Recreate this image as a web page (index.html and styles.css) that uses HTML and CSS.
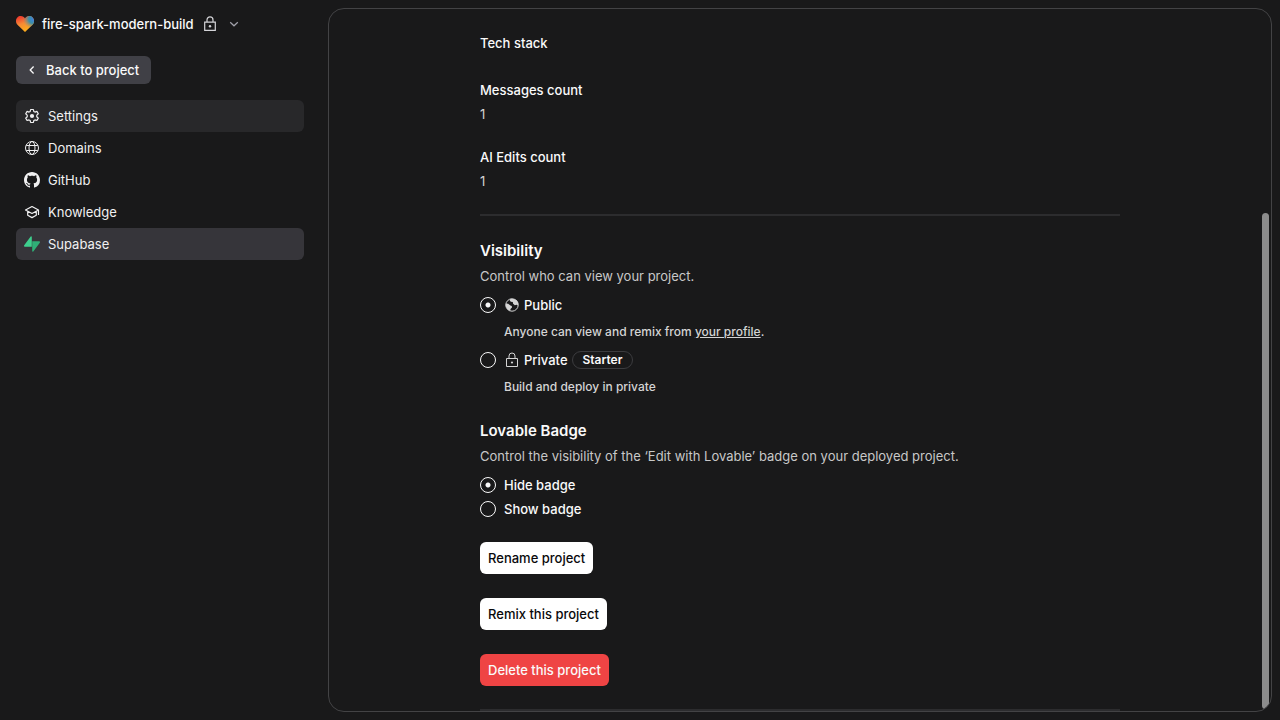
FILE: index.html
```html
<!DOCTYPE html>
<html lang="en">
<head>
<meta charset="utf-8">
<title>Project settings</title>
<link rel="stylesheet" href="styles.css">
</head>
<body>
<div class="app">
  <aside class="sidebar">
    <button class="project" type="button">
      <svg class="logo" width="18" height="16" viewBox="0 0 18 16" aria-hidden="true">
        <defs>
          <linearGradient id="heart-warm" x1="0.1" y1="0" x2="0.5" y2="1">
            <stop offset="0.1" stop-color="#f0402f"/><stop offset="0.5" stop-color="#f58a35"/><stop offset="0.9" stop-color="#fbaa1e"/>
          </linearGradient>
          <radialGradient id="heart-cool" cx="0.98" cy="0.2" r="0.6">
            <stop offset="0" stop-color="#3f7fe0"/><stop offset="0.45" stop-color="#3a8fa8"/><stop offset="1" stop-color="#8a8f80" stop-opacity="0"/>
          </radialGradient>
        </defs>
        <path d="M9 16 1.700 8.900C.3 7.600 0 6.300 0 5 0 2.100 2.100 0 4.800 0 6.700 0 8.200 1 9 2.600 9.800 1 11.300 0 13.200 0 15.900 0 18 2.100 18 5c0 1.300-.3 2.600-1.700 3.900z" fill="url(#heart-warm)"/>
        <path d="M9 16 1.700 8.900C.3 7.600 0 6.300 0 5 0 2.100 2.100 0 4.800 0 6.700 0 8.200 1 9 2.600 9.800 1 11.300 0 13.200 0 15.900 0 18 2.100 18 5c0 1.300-.3 2.600-1.700 3.900z" fill="url(#heart-cool)"/>
      </svg>
      <span class="project-name">fire-spark-modern-build</span>
      <svg class="project-lock" width="16" height="16" viewBox="0 0 16 16" fill="none" stroke="currentColor" stroke-width="1.200" aria-hidden="true"><path d="M2.700 6.200h10.600v8.200H2.700zM5 6V3.900a3 3 0 0 1 6 0V6"/><circle cx="8" cy="10.200" r="1.200" fill="currentColor" stroke="none"/></svg>
      <svg class="chevron" width="16" height="16" viewBox="0 0 16 16" fill="none" stroke="currentColor" stroke-width="1.200" aria-hidden="true"><path d="m4.200 6.200 3.800 3.600 3.800-3.600"/></svg>
    </button>

    <button class="back" type="button">
      <svg width="16" height="16" viewBox="0 0 16 16" fill="none" stroke="currentColor" stroke-width="1.300" aria-hidden="true"><path d="M9.600 4.500 6.200 8l3.400 3.500"/></svg>
      Back to project
    </button>

    <nav class="nav">
      <a class="nav-item current" href="#settings" aria-current="page">
        <svg width="16" height="16" viewBox="0 0 16 16" fill="none" stroke="currentColor" stroke-width="1.200" stroke-linejoin="round" aria-hidden="true"><path d="M6.600 1.500h2.800l.4 1.900 1.200.7 1.900-.7 1.400 2.400-1.500 1.300v1.600l1.500 1.400-1.400 2.400-1.900-.6-1.200.7-.4 1.900H6.600l-.4-1.900-1.200-.7-1.900.6-1.400-2.400 1.500-1.400V7.100L1.700 5.800l1.400-2.400 1.900.7 1.200-.7z"/><circle cx="8" cy="8" r="2.100" fill="currentColor" stroke="none"/></svg>
        Settings
      </a>
      <a class="nav-item" href="#domains">
        <svg width="16" height="16" viewBox="0 0 16 16" fill="none" stroke="currentColor" aria-hidden="true"><circle cx="8" cy="8" r="6.500"/><ellipse cx="8" cy="8" rx="3" ry="6.500"/><path d="M2.200 5.500h11.600M2.200 10.500h11.600"/></svg>
        Domains
      </a>
      <a class="nav-item" href="#github">
        <svg width="16" height="16" viewBox="0 0 16 16" fill="currentColor" aria-hidden="true"><path d="M8 0C3.580 0 0 3.580 0 8c0 3.540 2.290 6.530 5.470 7.590.4.070.55-.17.55-.38 0-.19-.01-.82-.01-1.490-2.010.37-2.530-.49-2.690-.94-.09-.23-.48-.94-.82-1.130-.28-.15-.68-.52-.01-.53.63-.01 1.080.58 1.230.82.72 1.210 1.870.87 2.330.66.07-.52.28-.87.51-1.070-1.780-.2-3.640-.89-3.640-3.950 0-.87.31-1.590.82-2.150-.08-.2-.36-1.020.08-2.120 0 0 .67-.21 2.200.82.640-.18 1.320-.27 2-.27s1.360.09 2 .27c1.530-1.040 2.200-.82 2.200-.82.440 1.100.160 1.920.080 2.120.510.560.820 1.270.820 2.150 0 3.070-1.870 3.750-3.650 3.950.290.250.540.730.540 1.480 0 1.070-.01 1.930-.01 2.200 0 .210.150.460.550.380A8 8 0 0 0 16 8c0-4.420-3.580-8-8-8"/></svg>
        GitHub
      </a>
      <a class="nav-item" href="#knowledge">
        <svg width="16" height="16" viewBox="0 0 16 16" fill="none" stroke="currentColor" stroke-width="1.200" stroke-linejoin="round" aria-hidden="true"><path d="M8 2.500 1.500 6 8 9.500 14.500 6zM14.500 6v5M3.700 7.400v3.900L8 13.600l4.300-2.300V7.400"/></svg>
        Knowledge
      </a>
      <a class="nav-item hovered" href="#supabase">
        <svg width="16" height="16" viewBox="0 0 16 16" aria-hidden="true"><path d="M8.200 5.300h7c.8 0 1.100.8.600 1.400L9.300 15.500c-.4.600-1.100.3-1.100-.4z" fill="#2fae77"/><path d="M7.800 10.700H.8c-.8 0-1.100-.8-.6-1.400L6.700.5c.4-.6 1.100-.3 1.100.4z" fill="#3ecf8e"/></svg>
        Supabase
      </a>
    </nav>
  </aside>

  <main class="panel">
    <div class="content">
      <dl class="stats">
        <div class="stat"><dt>Tech stack</dt></div>
        <div class="stat"><dt>Messages count</dt><dd>1</dd></div>
        <div class="stat"><dt>AI Edits count</dt><dd>1</dd></div>
      </dl>
      <hr class="divider">

      <section class="section">
        <h2>Visibility</h2>
        <p class="description">Control who can view your project.</p>
        <div class="option">
          <input type="radio" id="public" name="visibility" checked>
          <label for="public">
            <svg width="16" height="16" viewBox="0 0 16 16" aria-hidden="true"><circle cx="8" cy="8" r="6.200" fill="none" stroke="currentColor"/><path d="M6.500 1.800 5.600 3.300l1.200 1.500 2 .2.300 1.800 1.700 1.500 1.800-.5 1.500.7.200-2.500-1.500-2.800L10 1.900zM1.800 6.500l2.400.2 2.200 1.800 1.400.6.200 1.500-1.500 1.500-.3 2-2.700-1.600-1.700-3z" fill="currentColor"/></svg>
            Public
          </label>
        </div>
        <p class="hint">Anyone can view and remix from <a href="#profile">your profile</a>.</p>
        <div class="option">
          <input type="radio" id="private" name="visibility">
          <label for="private">
            <svg width="16" height="16" viewBox="0 0 16 16" fill="none" stroke="currentColor" aria-hidden="true"><path d="M2.500 6.500h11v8h-11zM5 6V4a3 3 0 0 1 6 0v2"/><circle cx="8" cy="10.500" r="1.100" fill="currentColor" stroke="none"/></svg>
            Private
            <span class="tag">Starter</span>
          </label>
        </div>
        <p class="hint">Build and deploy in private</p>
      </section>

      <section class="section">
        <h2>Lovable Badge</h2>
        <p class="description">Control the visibility of the ‘Edit with Lovable’ badge on your deployed project.</p>
        <div class="option">
          <input type="radio" id="hide" name="badge" checked>
          <label for="hide">Hide badge</label>
        </div>
        <div class="option compact">
          <input type="radio" id="show" name="badge">
          <label for="show">Show badge</label>
        </div>
      </section>

      <div class="actions">
        <button class="button" type="button">Rename project</button>
        <button class="button" type="button">Remix this project</button>
        <button class="button danger" type="button">Delete this project</button>
      </div>
      <hr class="divider">
    </div>
    <div class="scroll-thumb"></div>
  </main>
</div>
</body>
</html>
```
FILE: styles.css
```css
* { box-sizing: border-box; }

body {
  margin: 0;
  background: #19191a;
  color: #fafafa;
  font: 400 14px/20px Inter, "Liberation Sans", sans-serif;
}

button { font: inherit; color: inherit; border: 0; }
svg { flex: none; display: block; }
h2, p, dl, dd { margin: 0; }

.app {
  display: flex;
  gap: 24px;
  height: 100vh;
  padding: 8px 8px 8px 16px;
}

.sidebar {
  width: 288px;
  flex: none;
  display: flex;
  flex-direction: column;
  align-items: flex-start;
}

.project {
  display: flex;
  align-items: center;
  height: 32px;
  padding: 0;
  background: none;
  font-size: 13px;
  font-weight: 500;
}
.project-name { margin-left: 8px; }
.project-lock { margin-left: 8px; color: #d4d4d8; }
.chevron { margin-left: 8px; color: #a1a1aa; }

.back {
  display: flex;
  align-items: center;
  gap: 6px;
  height: 28px;
  margin: 16px 0;
  padding: 0 12px 0 8px;
  border-radius: 6px;
  background: #404046;
  font-size: 13px;
  font-weight: 500;
}

.nav { align-self: stretch; }
.nav-item {
  display: flex;
  align-items: center;
  gap: 8px;
  height: 32px;
  padding: 0 8px;
  border-radius: 6px;
  color: #f0f0f1;
  font-size: 13px;
  text-decoration: none;
}
.current { background: #28282a; }
.hovered { background: #36353a; }

.panel {
  position: relative;
  flex: 1;
  min-width: 0;
  overflow: hidden;
  border: 1px solid #434345;
  border-radius: 16px;
}

.content {
  max-width: 640px;
  margin: 0 auto;
  padding-top: 24px;
  font-size: 13px;
}

.stat {
  display: flex;
  flex-direction: column;
  margin-bottom: 23px;
}
.stat dt { margin-bottom: 4px; font-weight: 500; }
.stat dd { color: #d4d4d4; }

.divider {
  height: 2px;
  margin: 0;
  border: 0;
  background: #2c2c2e;
}

.section { margin-top: 24px; }
.section h2 {
  margin-bottom: 4px;
  font-size: 15px;
  line-height: 22px;
  font-weight: 600;
}
.description { color: #c8c8c8; }

.option {
  display: flex;
  align-items: center;
  gap: 8px;
  margin-top: 9px;
}
.option.compact { margin-top: 4px; }
.option label {
  display: flex;
  align-items: center;
  gap: 4px;
  font-weight: 500;
}
.option svg { color: #d4d4d4; }
.option input {
  appearance: none;
  width: 16px;
  height: 16px;
  margin: 0;
  border: 1px solid #fafafa;
  border-radius: 50%;
}
.option input:checked {
  background: radial-gradient(circle, #fafafa 2px, transparent 3px);
}

.tag {
  padding: 0 10px;
  border: 1px solid #3c3c3f;
  border-radius: 9px;
  font-size: 12px;
  line-height: 16px;
  font-weight: 600;
}

.hint {
  margin: 8px 0 0 24px;
  color: #d4d4d4;
  font-size: 12px;
  line-height: 18px;
  font-weight: 500;
}
.hint a { color: inherit; }

.actions {
  display: flex;
  flex-direction: column;
  align-items: flex-start;
  gap: 24px;
  margin: 23px 0;
}
.button {
  height: 32px;
  padding: 0 8px;
  border-radius: 6px;
  background: #fff;
  color: #09090b;
  font-weight: 500;
}
.danger { background: #ef4444; color: #fafafa; }

.scroll-thumb {
  position: absolute;
  right: 2px;
  bottom: 2px;
  width: 7px;
  height: 496px;
  border-radius: 4px;
  background: #8c8c8c;
}
```
